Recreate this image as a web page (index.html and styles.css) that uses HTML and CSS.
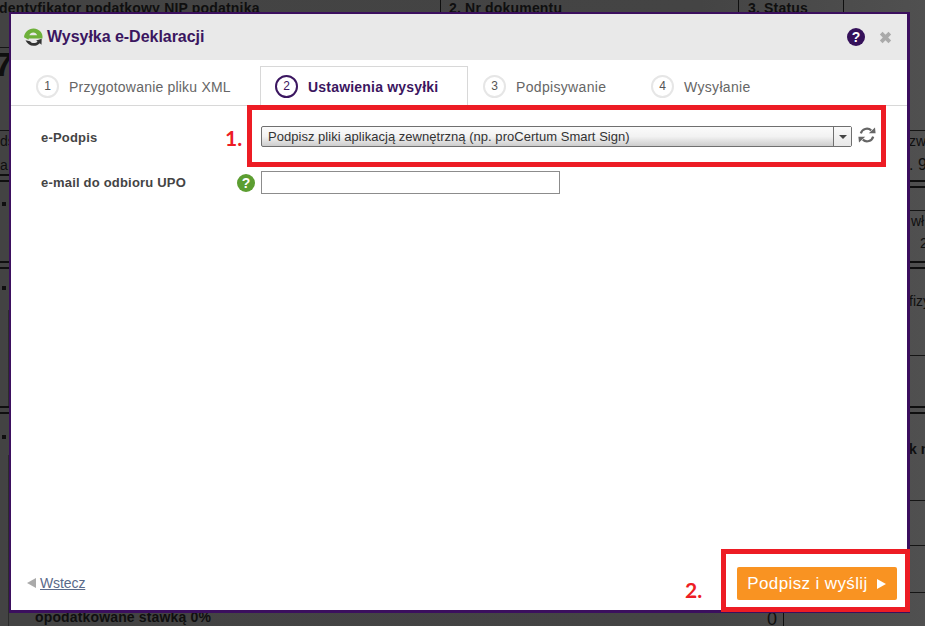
FILE: index.html
```html
<!DOCTYPE html>
<html lang="pl">
<head>
<meta charset="utf-8">
<title>Wysyłka e-Deklaracji</title>
<link rel="stylesheet" href="styles.css">
</head>
<body>
<div class="doc" aria-hidden="true">
  <span class="bg t1">dentyfikator podatkowy NIP podatnika</span>
  <span class="bg t2">2. Nr dokumentu</span>
  <span class="bg t3">3. Status</span>
  <i class="vl v1"></i><i class="vl v2"></i><i class="vl v3"></i>
  <i class="hl h0"></i>
  <span class="bg big">7/</span>
  <span class="bg l1">ds</span><span class="bg l2">a</span>
  <i class="sq d1"></i><i class="sq d2"></i><i class="sq d3"></i>
  <i class="dbl yl"></i><i class="dbl y1"></i><i class="dbl y2"></i><i class="dbl y3"></i>
  <i class="hl h1"></i><i class="hl h2"></i><i class="hl h3"></i><i class="hl h4"></i><i class="hl h5"></i><i class="hl h6"></i>
  <span class="bg r1">zw</span><span class="bg r2">. 9</span><span class="bg r3">wł</span><span class="bg r4">2</span><span class="bg r5">fizy</span><span class="bg r6">k n</span>
  <span class="bg b1">opodatkowane stawką 0%</span>
  <span class="bg b2">0</span>
  <i class="vl v4"></i><i class="vl v5"></i><i class="vl v6"></i>
</div>

<section class="dialog">
  <header class="head">
    <svg class="logo" width="20" height="20" viewBox="0 0 20 20">
      <path d="M10.500 1.500C5.500 1.500 1.500 5 1 10.200l4.500 2.600c.1-.4.200-.8.300-1.300H19.500c.2-2.600-.3-4.900-1.800-6.700C16 3 13.500 1.500 10.500 1.500zM6.300 8.300C6.900 6.600 8.400 5.500 10.300 5.500c1.900 0 3.300 1.100 3.900 2.800z" fill="#6eb03a"/>
      <path d="M2.500 13.300C4 16.800 7 18.800 10.500 18.800c2.600 0 4.700-.9 6.300-2.600l1.700 1.500.2-6-5.500 1.700 1.400 1.300c-.9.900-2.200 1.400-3.800 1.400-1.600 0-2.900-.7-3.700-1.900z" fill="#333"/>
    </svg>
    <h1 class="title">Wysyłka e-Deklaracji</h1>
    <span class="help">?</span>
    <svg class="close" width="13" height="13" viewBox="0 0 13 13"><path d="M2.200 2.200l8.600 8.600M10.800 2.200l-8.600 8.600" stroke="#aaa" stroke-width="3.800"/></svg>
  </header>

  <nav class="tabs">
    <div class="tab tab-a"><span class="num">1</span>Przygotowanie pliku XML</div>
    <div class="tab tab-b active"><span class="num">2</span>Ustawienia wysyłki</div>
    <div class="tab tab-c"><span class="num">3</span>Podpisywanie</div>
    <div class="tab tab-d"><span class="num">4</span>Wysyłanie</div>
  </nav>

  <form class="form">
    <div class="row row-sign">
      <label class="label">e-Podpis</label>
      <div class="select"><span class="sel-text">Podpisz pliki aplikacją zewnętrzną (np. proCertum Smart Sign)</span><span class="sel-btn"><i class="caret"></i></span></div>
      <svg class="refresh" width="18" height="18" viewBox="0 0 18 18" fill="none">
        <path d="M2.800 7.400A6.300 6.300 0 0 1 13.200 4.400" stroke="#666" stroke-width="2.200"/>
        <path d="M10.800 7.200h6.800L17 1.500z" fill="#666"/>
        <path d="M15.200 10.600A6.300 6.300 0 0 1 4.800 13.600" stroke="#666" stroke-width="2.200"/>
        <path d="M7.200 10.800H.4L1 16.500z" fill="#666"/>
      </svg>
    </div>
    <div class="row row-mail">
      <label class="label">e-mail do odbioru UPO</label>
      <span class="hint">?</span>
      <input class="input" type="text">
    </div>
  </form>

  <footer class="foot">
    <a class="back"><i class="back-arrow"></i><span>Wstecz</span></a>
    <button class="send" type="button">Podpisz i wyślij<i class="send-arrow"></i></button>
  </footer>
</section>

<div class="mark mark-1"></div>
<div class="mark mark-2"></div>
<span class="note note-1">1.</span>
<span class="note note-2">2.</span>
</body>
</html>
```

FILE: styles.css
```css
* { box-sizing: border-box; }
html, body { margin: 0; height: 100%; }
body {
  width: 925px;
  height: 626px;
  overflow: hidden;
  position: relative;
  background: #444;
  font-family: "Liberation Sans", Arial, sans-serif;
}

/* dimmed document behind the dialog */
.doc { position: absolute; inset: 0; overflow: hidden; background: linear-gradient(90deg, #434343 0, #444 700px, #505050 100%); }
.bg { position: absolute; color: #0f0f0f; white-space: nowrap; font-size: 14px; line-height: 16px; }
.t1 { left: -1px; top: 0; font-weight: bold; letter-spacing: .18px; }
.t2 { left: 449px; top: 0; font-weight: bold; letter-spacing: .18px; }
.t3 { left: 748px; top: 0; font-weight: bold; letter-spacing: .18px; }
.big { left: -6px; top: 46px; font-size: 34px; line-height: 36px; font-weight: bold; }
.l1 { left: 0; top: 133px; }
.l2 { left: 0; top: 157px; }
.sq { position: absolute; left: 2px; width: 4px; height: 4px; background: #0f0f0f; }
.d1 { top: 202px; }
.d2 { top: 286px; }
.d3 { top: 435px; }
.r1 { left: 909px; top: 133px; }
.r2 { left: 909px; top: 157px; font-size: 16px; }
.r3 { left: 911px; top: 213px; }
.r4 { left: 920px; top: 235px; }
.r5 { left: 909px; top: 293px; }
.r6 { left: 909px; top: 441px; font-weight: bold; }
.b1 { left: 35px; top: 609px; font-weight: bold; letter-spacing: .15px; }
.b2 { left: 767px; top: 610px; font-size: 18px; line-height: 18px; }
.vl { position: absolute; width: 1px; background: #0f0f0f; }
.v1 { left: 440px; top: 0; height: 14px; }
.v2 { left: 738px; top: 0; height: 14px; }
.v3 { left: 843px; top: 0; height: 14px; }
.v4 { left: 8px; top: 310px; height: 96px; background: #2c2c2c; }
.v5 { left: 8px; top: 455px; height: 171px; background: #2c2c2c; }
.v6 { left: 783px; top: 612px; height: 14px; }
.dbl { position: absolute; width: 16px; height: 8px; border-top: 2px solid #0f0f0f; border-bottom: 2px solid #0f0f0f; }
.yl { left: 0; width: 10px; top: 174px; }
.y1 { left: 909px; top: 180px; }
.y2 { left: 0; width: 925px; top: 261px; }
.y3 { left: 0; width: 925px; top: 406px; }
.hl { position: absolute; left: 909px; width: 16px; height: 1px; background: #151515; }
.h0 { left: 0; width: 10px; top: 47px; }
.h1 { left: 0; width: 925px; top: 130px; }
.h2 { top: 210px; }
.h3 { top: 355px; }
.h4 { top: 500px; }
.h5 { top: 545px; }
.h6 { top: 592px; }

/* dialog window */
.dialog {
  position: absolute;
  left: 9px;
  top: 12px;
  width: 901px;
  height: 601px;
  display: flex;
  flex-direction: column;
  background: #fff;
  border: 2px solid #3b0f5e;
  border-width: 2px 3px 3px 2px;
}
.head {
  height: 46px;
  flex: none;
  display: flex;
  align-items: center;
  padding: 0 15px 0 12px;
  background: #e9e9e9;
}
.logo { flex: none; margin-right: 4px; }
.title { margin: 0; flex: 1; font-size: 16px; letter-spacing: -.03px; font-weight: bold; color: #3b1660; }
.help {
  width: 18px;
  height: 18px;
  border-radius: 50%;
  background: #35115a;
  color: #fff;
  font-size: 14px;
  font-weight: bold;
  line-height: 18px;
  text-align: center;
  margin-right: 14px;
}
.tabs {
  height: 46px;
  flex: none;
  position: relative;
  border-bottom: 1px solid #d8d8d8;
}
.tab {
  position: absolute;
  top: 6px;
  height: 40px;
  display: flex;
  align-items: center;
  padding-top: 1px;
  font-size: 14px;
  letter-spacing: .2px;
  color: #666;
  white-space: nowrap;
}
.tab-a { left: 25px; }
.tab-b { left: 249px; width: 208px; padding-left: 14px; }
.tab-c { left: 472px; letter-spacing: .33px; }
.tab-d { left: 640px; letter-spacing: .33px; }
.active {
  background: #fff;
  border: 1px solid #d8d8d8;
  border-bottom: 1px solid #fff;
  color: #3b1660;
  font-weight: bold;
}
.num {
  width: 23px;
  height: 23px;
  margin-right: 10px;
  border: 2px solid #e6e6e6;
  border-radius: 50%;
  font-size: 12px;
  font-weight: normal;
  letter-spacing: 0;
  line-height: 19px;
  text-align: center;
  color: #555;
}
.active .num { border-color: #3b1660; color: #3b1660; }

.form { flex: 1; padding: 20px 0 0 30px; }
.row { display: flex; align-items: center; position: relative; }
.row-sign { height: 21px; }
.row-mail { height: 23px; margin-top: 24px; }
.label { width: 220px; flex: none; padding-top: 1px; font-size: 13px; letter-spacing: .2px; font-weight: bold; color: #444; }
.row-mail .label { width: 196px; padding: 0 0 1px; }
.hint {
  width: 18px;
  height: 18px;
  flex: none;
  margin-right: 6px;
  border-radius: 50%;
  background: #5c9e31;
  color: #fff;
  font-size: 14px;
  font-weight: bold;
  line-height: 18px;
  text-align: center;
}
.select {
  width: 591px;
  height: 21px;
  display: flex;
  border: 1px solid #6f6f6f;
  border-radius: 2px;
  background: linear-gradient(#fbfbfb, #f2f2f2 50%, #cdcdcd);
  font-size: 13px;
  letter-spacing: .03px;
  color: #333;
}
.sel-text { flex: 1; padding-left: 6px; line-height: 19px; }
.sel-btn {
  width: 18px;
  display: flex;
  align-items: center;
  justify-content: center;
  border-left: 1px solid #6f6f6f;
  background: linear-gradient(#fafafa, #e8e8e8);
}
.caret { border: 4px solid transparent; border-top: 4px solid #444; border-bottom: 0; }
.refresh { margin-left: 6px; margin-top: -3px; flex: none; }
.input {
  width: 299px;
  height: 23px;
  padding: 0;
  background: #fff;
  border: 1px solid #8c8c8c;
  border-radius: 0;
}

.foot {
  height: 64px;
  flex: none;
  display: flex;
  align-items: flex-end;
  justify-content: space-between;
  padding: 0 10px 10px 16px;
}
.back { display: flex; align-items: center; margin-bottom: 9px; font-size: 14px; letter-spacing: -.1px; color: #5a6a8a; }
.back span { text-decoration: underline; }
.back-arrow { border: 5px solid transparent; border-right: 9px solid #aaa; border-left: 0; margin-right: 4px; }
.send {
  width: 160px;
  height: 33px;
  display: flex;
  align-items: center;
  justify-content: center;
  padding: 0 1px 0 0;
  border: 0;
  border-radius: 2px;
  background: #f99322;
  color: #fff;
  font-family: inherit;
  font-size: 17px;
  letter-spacing: .38px;
}
.send-arrow { margin-left: 9px; border: 5px solid transparent; border-left: 9px solid #fff; border-right: 0; }

/* red annotations drawn over the screenshot */
.mark { position: absolute; border: 5px solid #ed1c24; }
.mark-1 { left: 247px; top: 105px; width: 639px; height: 62px; }
.mark-2 { left: 721px; top: 549px; width: 189px; height: 63px; }
.note { position: absolute; font-family: Lato, sans-serif; font-weight: bold; font-size: 21px; line-height: 24px; color: #ed1c24; }
.note-1 { left: 225px; top: 126px; }
.note-2 { left: 685px; top: 578px; }
```
